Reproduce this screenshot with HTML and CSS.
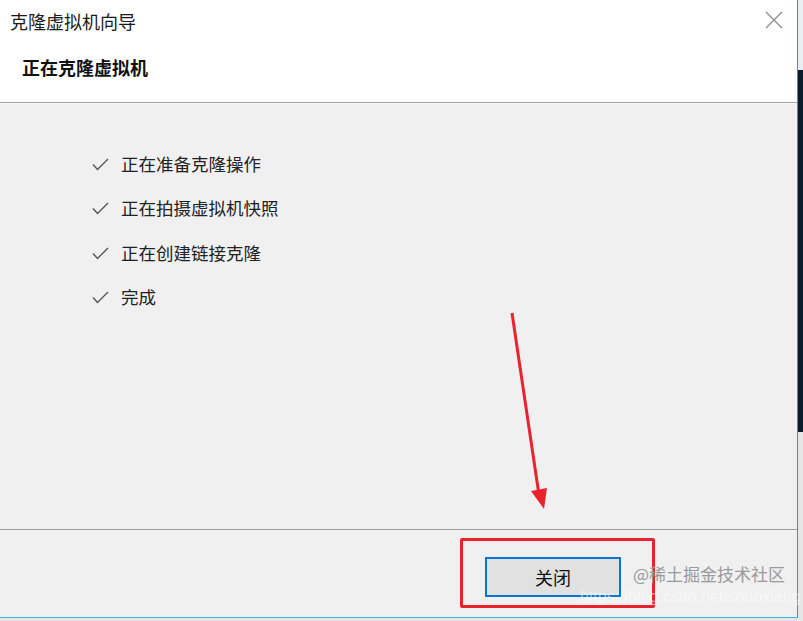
FILE: index.html
```html
<!DOCTYPE html>
<html lang="zh-CN">
<head>
  <meta charset="UTF-8">
  <title>克隆虚拟机向导</title>
  <link rel="stylesheet" href="styles.css">
</head>
<body>
  <div class="screen">
    <div class="dialog">
      <div class="top">
        <div class="titlebar">
          <span class="title">克隆虚拟机向导</span>
          <svg class="close" width="18" height="18" viewBox="0 0 18 18">
            <path d="M1 1L17 17M17 1L1 17" stroke="#8a8a8a" stroke-width="1.2" fill="none"/>
          </svg>
        </div>
        <h1 class="heading">正在克隆虚拟机</h1>
      </div>

      <div class="body">
        <ul class="steps">
          <li><svg class="check" width="17" height="13" viewBox="0 0 17 13"><path d="M1 6.5L5.5 11.5L16 1" stroke="#555" stroke-width="1.4" fill="none"/></svg>正在准备克隆操作</li>
          <li><svg class="check" width="17" height="13" viewBox="0 0 17 13"><path d="M1 6.5L5.5 11.5L16 1" stroke="#555" stroke-width="1.4" fill="none"/></svg>正在拍摄虚拟机快照</li>
          <li><svg class="check" width="17" height="13" viewBox="0 0 17 13"><path d="M1 6.5L5.5 11.5L16 1" stroke="#555" stroke-width="1.4" fill="none"/></svg>正在创建链接克隆</li>
          <li><svg class="check" width="17" height="13" viewBox="0 0 17 13"><path d="M1 6.5L5.5 11.5L16 1" stroke="#555" stroke-width="1.4" fill="none"/></svg>完成</li>
        </ul>
        <svg class="arrow" width="60" height="220" viewBox="0 0 60 220">
          <path d="M10 8L37 190" stroke="#e8232e" stroke-width="3" fill="none"/>
          <path d="M29 186L45 183L42 204Z" fill="#e8232e"/>
        </svg>
      </div>

      <div class="footer">
        <div class="highlight">
          <button class="btn">关闭</button>
        </div>
        <div class="mark">@稀土掘金技术社区</div>
        <div class="url">https://blog.csdn.net/shuoxiang</div>
      </div>
    </div>
    <div class="side">
      <div class="side-top"></div>
      <div class="side-dark"></div>
      <div class="side-bottom"></div>
    </div>
  </div>
</body>
</html>
```

FILE: styles.css
```css
/* Global Styling */
html, body {
  margin: 0;
  padding: 0;
}

body {
  width: 803px;
  height: 621px;
  overflow: hidden;
  font-family: "Noto Sans CJK SC", "Microsoft YaHei", sans-serif;
  color: #1a1a1a;
  background-color: #e6e6e6;
}

.screen {
  display: flex;
  height: 621px;
}

.dialog {
  width: 797px;
  height: 617px;
  border-right: 1px solid #3c8fd6;
  border-bottom: 1px solid #3cb8e0;
  background-color: #f0f0f0;
  display: flex;
  flex-direction: column;
  flex-shrink: 0;
}

/* Header */
.top {
  height: 102px;
  background-color: #ffffff;
  border-bottom: 1px solid #a0a0a0;
  box-shadow: 0 1px 0 #fafafa;
}

.titlebar {
  height: 44px;
  display: flex;
  align-items: center;
  justify-content: space-between;
  padding: 0 14px 0 10px;
}

.title {
  font-size: 18px;
  margin-top: -3px;
}

.close {
  margin-top: -4px;
}

.heading {
  margin: 0;
  padding: 10px 0 0 22px;
  font-size: 18px;
  font-weight: bold;
  color: #111;
}

/* Body */
.body {
  position: relative;
  height: 426px;
  border-bottom: 1px solid #a0a0a0;
}

.steps {
  list-style: none;
  margin: 0;
  padding: 38px 0 0 92px;
}

.steps li {
  height: 44.5px;
  display: flex;
  align-items: center;
  font-size: 17.5px;
  color: #222;
}

.check {
  margin: 2px 12px 0 0;
}

.arrow {
  position: absolute;
  left: 502px;
  top: 202px;
}

/* Footer */
.footer {
  position: relative;
  flex: 1;
}

.highlight {
  position: absolute;
  left: 460px;
  top: 8px;
  width: 189px;
  height: 64px;
  border: 3px solid #e8232e;
  border-radius: 2px;
}

.btn {
  position: absolute;
  left: 22px;
  top: 16px;
  width: 136px;
  height: 40px;
  border: 2px solid #0078d7;
  background-color: #e1e1e1;
  font-family: inherit;
  font-size: 18px;
  color: #111;
  padding: 0;
}

.mark {
  position: absolute;
  left: 633px;
  top: 31px;
  font-size: 17px;
  color: #9a9a9a;
  white-space: nowrap;
}

.url {
  position: absolute;
  left: 580px;
  top: 58px;
  font-family: "Liberation Sans", sans-serif;
  font-size: 16px;
  color: rgba(255, 255, 255, 0.55);
  white-space: nowrap;
}

/* Right edge of the desktop behind */
.side {
  flex: 1;
  display: flex;
  flex-direction: column;
}

.side-top {
  height: 70px;
  background-color: #e8eef2;
}

.side-dark {
  height: 362px;
  background-color: #0c1a2e;
}

.side-bottom {
  flex: 1;
  background-color: #e6e6e6;
}
```
